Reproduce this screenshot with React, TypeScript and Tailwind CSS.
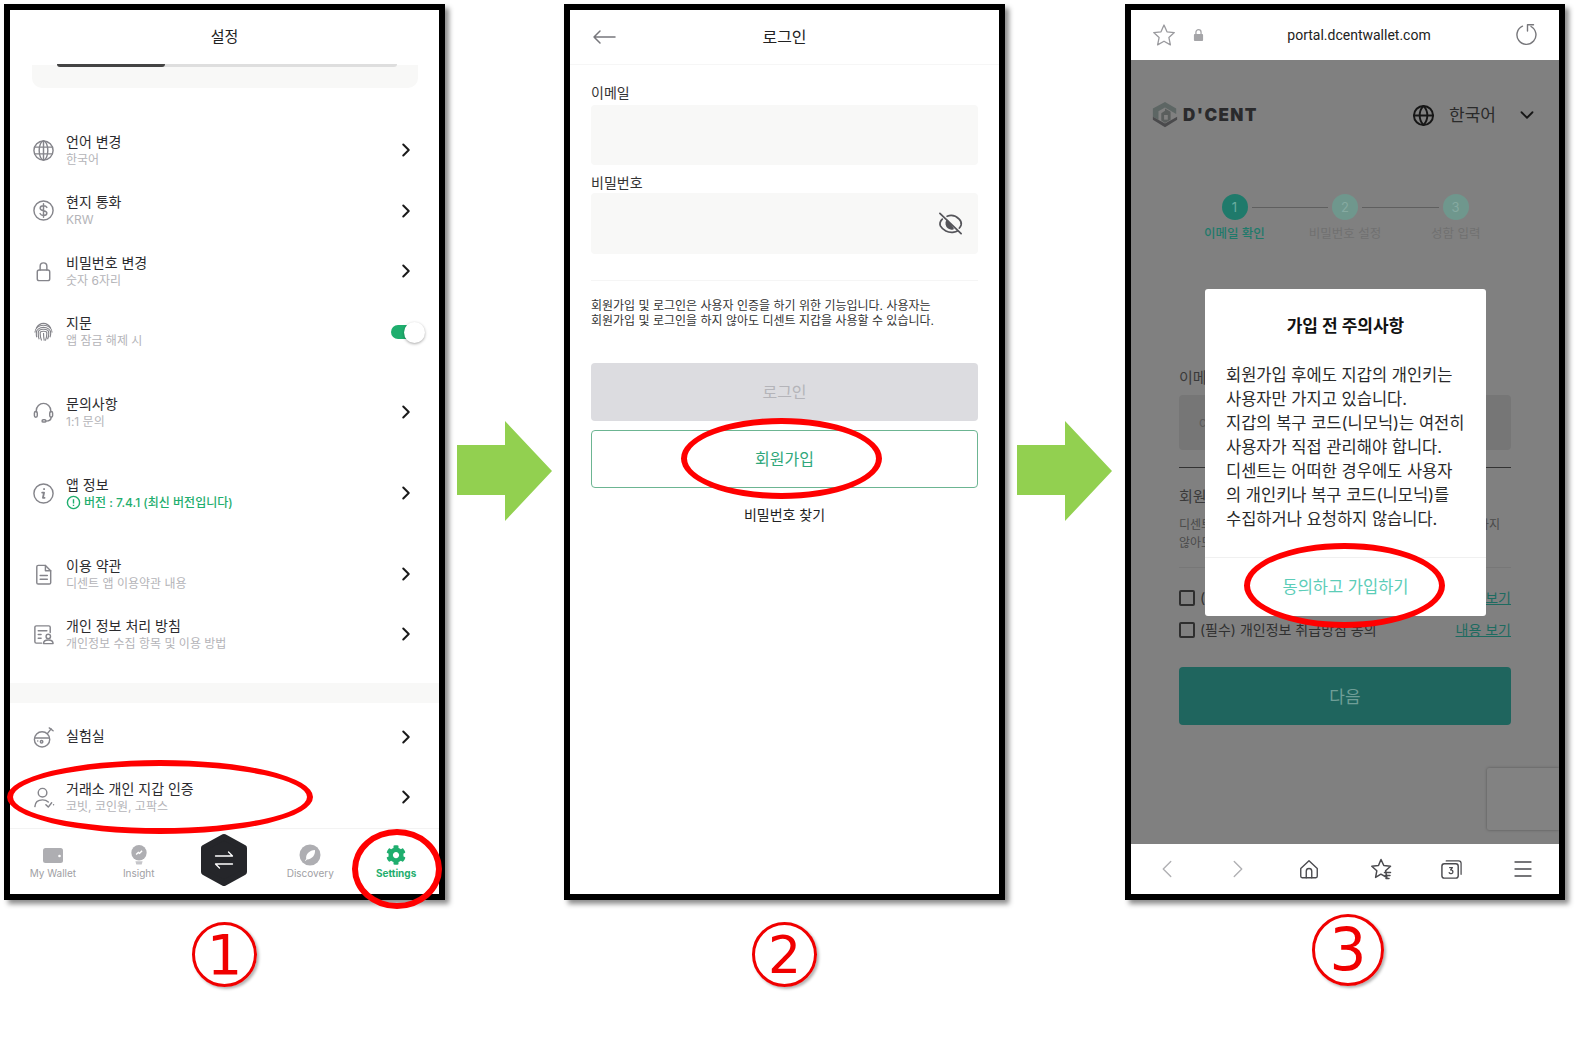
import type { ReactNode } from "react";
import { ChevronDown, ChevronLeft, ChevronRight, Globe, Menu } from "lucide-react";
import { FaCog } from "react-icons/fa";

function LineIcon({ children, className }: { children: ReactNode; className?: string }) {
  return (
    <svg
      viewBox="0 0 24 24"
      fill="none"
      stroke="currentColor"
      strokeWidth="1.5"
      strokeLinecap="round"
      strokeLinejoin="round"
      className={className ?? "w-[23px] h-[23px] text-[#85858b]"}
    >
      {children}
    </svg>
  );
}

const icons = {
  globe: (
    <LineIcon>
      <circle cx="12" cy="12" r="10" />
      <ellipse cx="12" cy="12" rx="4.5" ry="10" />
      <path d="M2.8 8.5h18.4M2.8 15.5h18.4M12 2v20" />
    </LineIcon>
  ),
  dollar: (
    <LineIcon>
      <circle cx="12" cy="12" r="10" />
      <path d="M15.5 8.8c-.6-1.2-1.9-1.8-3.5-1.8-2 0-3.5 1-3.5 2.6 0 3.6 7 1.8 7 5 0 1.6-1.5 2.6-3.5 2.6-1.7 0-3-.7-3.6-2M12 5v14" />
    </LineIcon>
  ),
  lock: (
    <LineIcon>
      <rect x="5.5" y="10.5" width="13" height="11" rx="2" />
      <path d="M8.5 10.5V6.5a3.5 3.5 0 0 1 7 0v4" />
    </LineIcon>
  ),
  finger: (
    <LineIcon>
      <g strokeWidth="1.2" strokeLinecap="butt">
        <path d="M4.5 8.5C6.5 5 9 3.5 12 3.5s5.5 1.5 7.5 5" />
        <path d="M3 13c.5-4.5 4-7.5 9-7.5s8.5 3 9 7.5" />
        <path d="M5 18c-.5-1.5-.5-3-.5-4.5C4.5 10 8 7.7 12 7.7s7.5 2.3 7.5 5.8c0 1.5-.2 3-.7 4.5" />
        <path d="M7.5 20c-1-2-1-4.5-1-6.5 0-2.5 2.5-3.8 5.5-3.8s5.5 1.3 5.5 3.8c0 2-.3 4.5-1.3 6.5" />
        <path d="M10 21.5c-1-2-1.5-5-1.5-8 0-1.1 1.5-1.8 3.5-1.8s3.5.7 3.5 1.8c0 2.5-.5 5.5-1.5 8" />
        <path d="M12 13.5c0 3 .3 5.500 .8 8" />
      </g>
    </LineIcon>
  ),
  headset: (
    <LineIcon>
      <path d="M4.5 11.5V10a7.5 7.5 0 0 1 15 0v1.5" />
      <rect x="2.5" y="11" width="3" height="6" rx="1.5" />
      <rect x="18.5" y="11" width="3" height="6" rx="1.5" />
      <path d="M20 17c0 2.5-2.5 4-5.5 4" />
      <rect x="10.5" y="19.5" width="4" height="2.5" rx="1.25" />
    </LineIcon>
  ),
  info: (
    <LineIcon>
      <circle cx="12" cy="12" r="10" />
      <path d="M12.6 7.3v.2M10.6 11h2l-1.2 5.5h1.7" strokeWidth="1.9" />
    </LineIcon>
  ),
  doc: (
    <LineIcon>
      <path d="M5 4a1.5 1.5 0 0 1 1.5-1.5H14L19.5 8v12.5A1.5 1.5 0 0 1 18 22H6.5A1.5 1.5 0 0 1 5 20.5z" />
      <path d="M14 2.5V8h5.5M8.5 13h7.5M8.5 17h7.5" />
    </LineIcon>
  ),
  privacy: (
    <LineIcon>
      <path d="M10 21H4.5A1.5 1.5 0 0 1 3 19.5v-15A1.5 1.5 0 0 1 4.5 3h13A1.5 1.5 0 0 1 19 4.5V10" />
      <path d="M6.5 8h9M6.5 12h3M6.5 16h3" />
      <circle cx="17" cy="14" r="2.3" />
      <path d="M12 21.5c0-2.5 2-3.8 5-3.8s5 1.3 5 3.8z" />
    </LineIcon>
  ),
  flask: (
    <LineIcon>
      <circle cx="10.5" cy="14" r="8" />
      <path d="M3 12.5h15M16 8l4-5M18 2l4 3" />
      <circle cx="10" cy="16.5" r="1.3" />
      <path d="M6 15.5v.1" />
    </LineIcon>
  ),
  person: (
    <LineIcon>
      <circle cx="11" cy="7" r="4.5" />
      <path d="M3 21.5c.3-4.5 3.5-7 8-7 2.5 0 4.5.8 6 2.2" />
      <path d="M14.5 19.5l2.5 2.5 3.5-4.5M22.5 19.5v.1" />
    </LineIcon>
  ),
};

function Row({
  icon,
  title,
  sub,
  className,
  right,
}: {
  icon: ReactNode;
  title: string;
  sub?: ReactNode;
  className: string;
  right?: ReactNode;
}) {
  return (
    <div className={`flex items-center pl-[21px] pr-[22px] ${className}`}>
      <div className="w-[24px] flex justify-center">{icon}</div>
      <div className={`ml-[11px] flex-1 ${sub ? "" : "-mt-[4px]"}`}>
        <p className="text-[14px] leading-[17px] text-[#2b2b2e]">{title}</p>
        {sub && <div className="mt-[1px] -mb-[1px] text-[12px] leading-[18px] text-[#b4b4b8]">{sub}</div>}
      </div>
      {right ?? <ChevronRight className="w-[22px] h-[22px] text-[#1a1a1a]" strokeWidth={2.2} />}
    </div>
  );
}

function Tab({ icon, label, active }: { icon: ReactNode; label: string; active?: boolean }) {
  return (
    <div className="flex flex-col items-center pt-[14px]">
      <div className="h-[24px] flex items-center justify-center">{icon}</div>
      <span className={`-mt-[1px] text-[10px] leading-[14px] ${active ? "font-bold text-[#1fae6e]" : "text-[#a0a0a4]"}`}>
        {label}
      </span>
    </div>
  );
}

function SettingsScreen() {
  return (
    <div className="h-full flex flex-col bg-white">
      <div className="h-[55px] flex items-center justify-center text-[15px] text-[#222]">설정</div>
      <div className="relative ml-[22px] mr-[21px] h-[23px] rounded-b-[10px] bg-[#f8f8f7]">
        <div className="absolute left-[25px] right-[21px] top-[-1px] h-[3px] rounded-b bg-[#dedede]">
          <div className="h-full w-[108px] rounded-b bg-[#444]" />
        </div>
      </div>
      <div className="h-[32px]" />
      <Row className="h-[60.5px]" icon={icons.globe} title="언어 변경" sub="한국어" />
      <Row className="h-[60.5px]" icon={icons.dollar} title="현지 통화" sub="KRW" />
      <Row className="h-[60.5px]" icon={icons.lock} title="비밀번호 변경" sub="숫자 6자리" />
      <Row
        className="h-[60.5px]"
        icon={icons.finger}
        title="지문"
        sub="앱 잠금 해제 시"
        right={
          <div className="relative w-[34px] h-[14px] -mr-[8px] mt-[1px]">
            <div className="absolute left-0 top-0 w-[22px] h-[14px] rounded-full bg-[#1fae6e]" />
            <div className="absolute right-0 -top-[3px] w-[21px] h-[21px] rounded-full bg-white shadow-[0_1px_3px_rgba(0,0,0,0.35)]" />
          </div>
        }
      />
      <Row className="h-[60px] mt-[20px]" icon={icons.headset} title="문의사항" sub="1:1 문의" />
      <Row
        className="h-[60px] mt-[21px]"
        icon={icons.info}
        title="앱 정보"
        sub={
          <div className="flex items-center gap-[3px] text-[#1fae6e] font-medium text-[12px]">
            <svg viewBox="0 0 16 16" className="w-[15px] h-[15px]" fill="none" stroke="currentColor" strokeWidth="1.5">
              <circle cx="8" cy="8" r="6.5" />
              <path d="M8 4.5V9M8 10.5v1.3" />
            </svg>
            버전 : 7.4.1 (최신 버전입니다)
          </div>
        }
      />
      <Row className="h-[60px] mt-[21px]" icon={icons.doc} title="이용 약관" sub="디센트 앱 이용약관 내용" />
      <Row className="h-[60px]" icon={icons.privacy} title="개인 정보 처리 방침" sub="개인정보 수집 항목 및 이용 방법" />
      <div className="h-[20px] mt-[19px] bg-[#f8f8f7]" />
      <Row className="h-[60px] mt-[4px]" icon={icons.flask} title="실험실" />
      <Row className="h-[60px]" icon={icons.person} title="거래소 개인 지갑 인증" sub="코빗, 코인원, 고팍스" />
      <div className="mt-[1px] flex-1 grid grid-cols-5 border-t border-[#f3f3f3]">
        <Tab
          label="My Wallet"
          icon={
            <svg viewBox="0 0 22 18" className="w-[22px] h-[18px]">
              <rect x="1" y="2" width="20" height="15" rx="2.5" fill="#aeaeb2" />
              <circle cx="17.5" cy="10" r="1.3" fill="#fff" />
            </svg>
          }
        />
        <Tab
          label="Insight"
          icon={
            <svg viewBox="0 0 20 24" className="w-[18px] h-[22px]">
              <circle cx="10" cy="9.5" r="8.5" fill="#aeaeb2" />
              <path d="M6 19h8l-1 3.5H7z" fill="#c6c6ca" />
              <path d="M6.8 11.5l2.5-2.3 1.3 1 2.8-3" stroke="#fff" strokeWidth="1.6" fill="none" />
            </svg>
          }
        />
        <div />
        <Tab
          label="Discovery"
          icon={
            <svg viewBox="0 0 22 22" className="w-[22px] h-[22px]">
              <circle cx="11" cy="11" r="10.5" fill="#aeaeb2" />
              <path d="M16 6c.4 5-2.5 9-8 9.5-.6.5-1 1-1.5 1.5l-.5-.5 1.2-1.5C6.5 10 10.5 6.3 16 6z" fill="#fff" />
            </svg>
          }
        />
        <Tab label="Settings" active icon={<FaCog className="w-[20px] h-[20px] text-[#1fae6e]" />} />
      </div>
      {/* center swap button */}
      <svg viewBox="0 0 48 52" className="absolute left-[190px] top-[824px] w-[48px] h-[52px]">
        <path d="M24 3l20 11v24L24 49 4 38V14z" fill="#25262a" stroke="#25262a" strokeWidth="6" strokeLinejoin="round" />
        <path d="M15.5 22h17l-4-4M32.5 30h-17l4 4" fill="none" stroke="#fff" strokeWidth="1.3" strokeLinecap="round" strokeLinejoin="round" />
      </svg>
    </div>
  );
}

function LoginScreen() {
  return (
    <div className="h-full flex flex-col bg-white">
      <div className="relative h-[55px] flex items-center justify-center border-b border-[#f6f6f6] text-[16px] text-[#222]">
        <svg viewBox="0 0 24 16" className="absolute left-[22px] top-[19px] w-[24px] h-[16px] text-[#77777c]" fill="none" stroke="currentColor" strokeWidth="1.5" strokeLinecap="round" strokeLinejoin="round">
          <path d="M23 8H2M8 2L2 8l6 6" />
        </svg>
        로그인
      </div>
      <div className="px-[21px] pt-[19px] flex flex-col">
        <p className="text-[14px] leading-[18px] text-[#333]">이메일</p>
        <div className="mt-[3px] h-[60px] rounded bg-[#f8f8f7]" />
        <p className="mt-[9px] text-[14px] leading-[18px] text-[#333]">비밀번호</p>
        <div className="mt-[1px] h-[61px] rounded bg-[#f8f8f7] flex items-center justify-end pr-[14px]">
          <svg viewBox="0 0 28 28" className="w-[27px] h-[27px] text-[#55555a]" fill="none" stroke="currentColor" strokeWidth="1.8" strokeLinecap="round" strokeLinejoin="round">
            <path d="M3 3.5l22 21" />
            <path d="M5.5 9.5C3.5 11.5 2.5 14 3.5 16.5c2.5 4.5 8 7.5 14 6.5 1.3-.2 2.5-.6 3.5-1.2" />
            <path d="M10.5 6.5c4-1.5 9-.5 12.5 3 1.5 1.5 2.5 4 2 6-.4 1.3-1 2.3-1.8 3.2" />
            <path d="M10.5 11c-1.5 2-1 5.5 1.5 7.5 1.5 1 3 1.2 4.5.8z" fill="currentColor" />
          </svg>
        </div>
        <div className="mt-[26px] h-px bg-[#f5f5f5]" />
        <p className="mt-[17px] text-[12px] leading-[15px] text-[#333] whitespace-nowrap">
          회원가입 및 로그인은 사용자 인증을 하기 위한 기능입니다. 사용자는
          <br />
          회원가입 및 로그인을 하지 않아도 디센트 지갑을 사용할 수 있습니다.
        </p>
        <div className="mt-[35px] h-[58px] rounded bg-[#dcdce0] flex items-center justify-center text-[16px] text-[#b4b4b9]">
          로그인
        </div>
        <div className="mt-[9px] h-[58px] rounded border border-[#6cb592] flex items-center justify-center text-[16px] text-[#2fa77a]">
          회원가입
        </div>
        <p className="mt-[18px] text-center text-[14px] leading-[18px] text-[#222]">비밀번호 찾기</p>
      </div>
    </div>
  );
}

function BrowserScreen() {
  return (
    <div className="h-full flex flex-col bg-white">
      <div className="h-[50px] relative flex items-center justify-center text-[14px] font-[Roboto,sans-serif] text-[#222]">
        <svg viewBox="0 0 24 24" className="absolute left-[21px] top-[13px] w-[24px] h-[24px] text-[#9a9a9e]" fill="none" stroke="currentColor" strokeWidth="1.3" strokeLinejoin="round">
          <path d="M12 2l3 6.8 7.3.8-5.4 5 1.5 7.3L12 18.200l-6.400 3.700 1.500-7.300-5.400-5 7.300-.8z" />
        </svg>
        <svg viewBox="0 0 12 14" className="absolute left-[62px] top-[18px] w-[11px] h-[14px] text-[#a5a5a8]" fill="none" stroke="currentColor">
          <rect x="1" y="6" width="10" height="7.5" rx="1" fill="currentColor" stroke="none" />
          <path d="M3.2 6.2V4a2.8 2.8 0 0 1 5.6 0v2.2" strokeWidth="1.4" />
        </svg>
        <span className="ml-[28px]">portal.dcentwallet.com</span>
        <svg viewBox="0 0 24 24" className="absolute right-[21px] top-[12px] w-[24px] h-[24px] text-[#77777b]" fill="none" stroke="currentColor" strokeWidth="1.4" strokeLinecap="round" strokeLinejoin="round">
          <path d="M8.5 4.2A9.5 9.5 0 1 0 17 4.5M13.5 9V2.8h6" />
        </svg>
      </div>

      <div className="relative flex-1 bg-[#808080]">
        <div className="pt-[40px] pl-[20px] pr-[21px] h-[70px] flex items-center justify-between">
          <div className="flex items-center gap-[4px]">
            <svg viewBox="0 0 30 30" className="w-[28px] h-[30px]">
              <path d="M15 1L27 8v6l-12-7-7 4v9l-6-3V8z" fill="#5d6664" />
              <path d="M2 20l13 8 13-8v-3L15 24 2 17z" fill="#4a4a4c" />
              <path d="M11 13l4-2.5V8l6 3.500V20l-6 3.500-4-2.500z" fill="#5a5e5d" />
              <path d="M14 15h4v5h-4z" fill="#808080" />
            </svg>
            <span className="text-[17px] leading-none font-black tracking-[1.4px] text-[#2a2a2c]">D'CENT</span>
          </div>
          <div className="flex items-center text-[#161616]">
            <Globe className="w-[23px] h-[23px]" strokeWidth={2} />
            <span className="ml-[14px] mt-[2px] text-[17px] text-[#2a2a2a]">한국어</span>
            <ChevronDown className="ml-[20px] w-[22px] h-[22px]" strokeWidth={2} />
          </div>
        </div>

        <div className="mt-[64px] px-[48px]">
          <div className="mx-auto w-[247px] flex items-center gap-[4px] text-[13px] text-center leading-[26px]">
            <div className="w-[26px] h-[26px] rounded-full bg-[#1f7a6b] text-[#6aaea0]">1</div>
            <div className="flex-1 h-px bg-[#5f5f5f]" />
            <div className="w-[26px] h-[26px] rounded-full bg-[#6f978d] text-[#86aaa1]">2</div>
            <div className="flex-1 h-px bg-[#5f5f5f]" />
            <div className="w-[26px] h-[26px] rounded-full bg-[#6f978d] text-[#86aaa1]">3</div>
          </div>
          <div className="mt-[5px] grid grid-cols-3 text-center text-[12.5px] leading-[18px]">
            <span className="text-[#1f7a6b] font-medium">이메일 확인</span>
            <span className="text-[#707070]">비밀번호 설정</span>
            <span className="text-[#707070]">성함 입력</span>
          </div>

          <p className="mt-[124px] text-[15px] leading-[22px] text-[#3a3a3a]">이메일</p>
          <div className="mt-[6px] h-[55px] rounded bg-[#767676] flex items-center pl-[20px] text-[13px] text-[#5c5c5c]">
            c
          </div>
          <div className="mt-[17px] h-px bg-[#333]" />
          <p className="mt-[18px] text-[15px] leading-[22px] text-[#3a3a3a]">회원가입</p>
          <div className="mt-[8px] flex justify-between text-[12px] leading-[18px] text-[#4a4a4a]">
            <span>디센트</span>
            <span className="pr-[11px]">하지</span>
          </div>
          <p className="text-[12px] leading-[18px] text-[#4a4a4a]">않아도</p>
          <div className="mt-[15px] h-px bg-[#777]" />
          <div className="mt-[20px] flex items-center justify-between text-[14px] leading-[20px] text-[#303030]">
            <div className="flex items-center gap-[5px]">
              <div className="w-[16px] h-[16px] rounded-[2px] border-2 border-[#2e2e2e]" />
              <span>(필수)</span>
            </div>
            <span className="underline text-[#1d6b60]">내용 보기</span>
          </div>
          <div className="mt-[12px] flex items-center justify-between text-[14px] leading-[20px] text-[#303030]">
            <div className="flex items-center gap-[5px]">
              <div className="w-[16px] h-[16px] rounded-[2px] border-2 border-[#2e2e2e]" />
              <span>(필수) 개인정보 취급방침 동의</span>
            </div>
            <span className="underline text-[#1d6b60]">내용 보기</span>
          </div>
          <div className="mt-[27px] h-[58px] pt-[4px] rounded-[4px] bg-[#1f655e] flex items-center justify-center text-[17px] text-[#6f9e97]">
            다음
          </div>
        </div>

        {/* recaptcha badge */}
        <div className="absolute right-0 top-[708px] w-[72px] h-[62px] rounded-l-[2px] bg-[#828282] shadow-[0_0_3px_rgba(0,0,0,0.35)]" />

        {/* notice dialog */}
        <div className="absolute left-[74px] top-[229px] w-[281px] h-[327px] rounded-[3px] bg-white flex flex-col">
          <p className="mt-[26px] text-center text-[17px] leading-[22px] font-bold text-[#111]">가입 전 주의사항</p>
          <p className="mt-[26px] ml-[21px] text-[16.5px] leading-[24px] text-[#2a2a2a] whitespace-nowrap">
            회원가입 후에도 지갑의 개인키는
            <br />
            사용자만 가지고 있습니다.
            <br />
            지갑의 복구 코드(니모닉)는 여전히
            <br />
            사용자가 직접 관리해야 합니다.
            <br />
            디센트는 어떠한 경우에도 사용자
            <br />
            의 개인키나 복구 코드(니모닉)를
            <br />
            수집하거나 요청하지 않습니다.
          </p>
          <div className="mt-[26px] h-px bg-[#f0f0f0]" />
          <div className="flex-1 flex items-center justify-center text-[16.5px] text-[#5ccdb8]">동의하고 가입하기</div>
        </div>
      </div>

      <div className="h-[50px] grid grid-cols-6 items-center justify-items-center text-[#4a4a4e]">
        <ChevronLeft className="w-[30px] h-[30px] text-[#b0b0b3]" strokeWidth={1.1} />
        <ChevronRight className="w-[30px] h-[30px] text-[#b0b0b3]" strokeWidth={1.1} />
        <LineIcon className="w-[22px] h-[22px]">
          <path d="M3 20V11.5L12 3l9 8.5V20a1.5 1.5 0 0 1-1.5 1.5h-15A1.5 1.5 0 0 1 3 20z" />
          <path d="M9 21.5v-7a3 3 0 0 1 6 0v7" />
        </LineIcon>
        <LineIcon className="w-[24px] h-[24px]">
          <path d="M12 2.5l2.8 6 6.700.8-4.900 4.500 1.300 6.700-6-3.300-5.300 3.200 1.200-6.600-5-4.500 6.700-.8z" />
          <path d="M15.5 15.5h6M16 18.5h5M17 21.5h3" />
        </LineIcon>
        <LineIcon className="w-[23px] h-[23px]">
          <rect x="2" y="6" width="17" height="15" rx="2.5" />
          <path d="M6.5 3h13A2.5 2.5 0 0 1 22 5.5V17M10 10h3l-2 2.5c1.5 0 2.5.5 2.5 2 0 2-3 2.5-4 .8" strokeWidth="1.3" />
        </LineIcon>
        <Menu className="w-[24px] h-[24px]" strokeWidth={1.3} />
      </div>
    </div>
  );
}

function Arrow({ className }: { className: string }) {
  return (
    <svg viewBox="0 0 95 100" className={`mt-[417px] ml-[12px] w-[95px] h-[100px] shrink-0 ${className}`}>
      <path d="M0 24h48V0l47 50-47 50V74H0z" fill="#92d050" />
    </svg>
  );
}

function Ellipse({ className }: { className: string }) {
  return <div className={`absolute rounded-[50%] border-[6px] border-[#ff0000] ${className}`} />;
}

function StepNumber({ n, className }: { n: string; className: string }) {
  return (
    <div
      className={`rounded-full border-[3px] border-[#f00000] flex items-center justify-center font-['DejaVu_Sans',sans-serif] text-[#f00000] shadow-[2px_2px_3px_rgba(0,0,0,0.3)] ${className}`}
    >
      {n}
    </div>
  );
}

export default function App() {
  return (
    <div className="w-[1578px] h-[1042px] bg-white pt-[4px] pl-[4px] flex items-start font-[Inter,'Noto_Sans_CJK_KR',sans-serif]">
      <div className="flex flex-col items-center">
        <div className="relative w-[441px] h-[896px] border-[6px] border-black shadow-[4px_4px_5px_rgba(0,0,0,0.45)]">
          <SettingsScreen />
          <Ellipse className="left-[-3px] top-[750px] w-[306px] h-[74px]" />
          <Ellipse className="left-[342px] top-[819px] w-[90px] h-[80px]" />
        </div>
        <StepNumber n="1" className="mt-[22px] w-[65px] h-[65px] text-[56px]" />
      </div>
      <Arrow className="mr-[12px]" />
      <div className="flex flex-col items-center">
        <div className="relative w-[441px] h-[896px] border-[6px] border-black shadow-[4px_4px_5px_rgba(0,0,0,0.45)]">
          <LoginScreen />
          <Ellipse className="left-[111px] top-[408px] w-[201px] h-[81px]" />
        </div>
        <StepNumber n="2" className="mt-[22px] w-[65px] h-[65px] text-[52px]" />
      </div>
      <Arrow className="mr-[13px]" />
      <div className="flex flex-col items-center">
        <div className="relative w-[440px] h-[896px] border-[6px] border-black shadow-[4px_4px_5px_rgba(0,0,0,0.45)]">
          <BrowserScreen />
          <Ellipse className="left-[113px] top-[533px] w-[201px] h-[85px]" />
        </div>
        <StepNumber n="3" className="mt-[14px] ml-[6px] w-[72px] h-[72px] text-[58px]" />
      </div>
    </div>
  );
}
